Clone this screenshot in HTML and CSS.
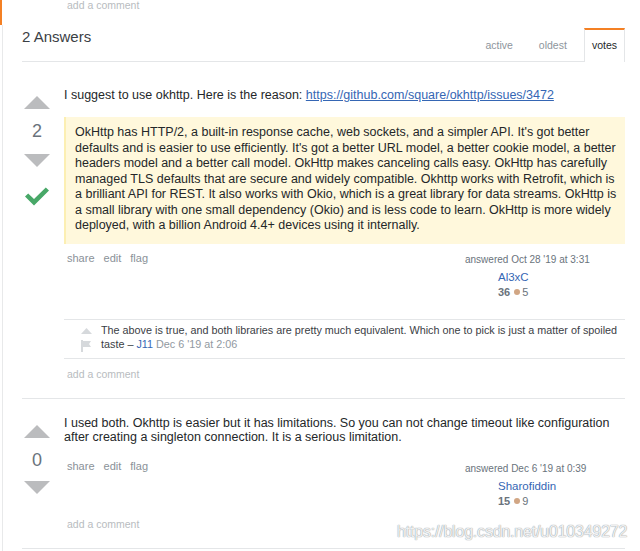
FILE: index.html
```html
<!DOCTYPE html>
<html>
<head>
<meta charset="utf-8">
<link rel="stylesheet" href="styles.css">
</head>
<body>
<div class="page">
  <div class="prev-comment"><span class="add-comment">add a comment</span></div>
  <div class="main">
    <div class="answers-header">
      <h2 class="answers-count">2 Answers</h2>
      <div class="tabs">
        <span class="tab">active</span>
        <span class="tab">oldest</span>
        <span class="tab selected">votes</span>
      </div>
    </div>

    <div class="answer answer-first">
      <div class="votecell">
        <svg class="vote-up" width="26" height="13" viewBox="0 0 26 13"><polygon points="0,13 13,0 26,13" fill="#bbbcbe"/></svg>
        <div class="vote-count">2</div>
        <svg class="vote-down" width="26" height="13" viewBox="0 0 26 13"><polygon points="0,0 26,0 13,13" fill="#bbbcbe"/></svg>
        <svg class="accepted" width="24" height="20" viewBox="0 0 24 20"><path d="M0 9.5 L3.2 6.5 L9 12 L20.8 0.5 L24 3.5 L9 18.5 Z" fill="#48a868"/></svg>
      </div>
      <div class="postcell">
        <p class="post-text">I suggest to use okhttp. Here is the reason: <a class="link" href="#">https://github.com/square/okhttp/issues/3472</a></p>
        <blockquote class="quote">OkHttp has HTTP/2, a built-in response cache, web sockets, and a simpler API. It's got better<br>defaults and is easier to use efficiently. It's got a better URL model, a better cookie model, a better<br>headers model and a better call model. OkHttp makes canceling calls easy. OkHttp has carefully<br>managed TLS defaults that are secure and widely compatible. Okhttp works with Retrofit, which is<br>a brilliant API for REST. It also works with Okio, which is a great library for data streams. OkHttp is<br>a small library with one small dependency (Okio) and is less code to learn. OkHttp is more widely<br>deployed, with a billion Android 4.4+ devices using it internally.</blockquote>
        <div class="post-footer">
          <div class="post-menu"><span>share</span><span>edit</span><span>flag</span></div>
          <div class="user-card">
            <div class="user-action">answered Oct 28 '19 at 3:31</div>
            <div class="user-details">
              <a class="user-name" href="#">Al3xC</a>
              <div class="user-rep"><span class="rep">36</span><span class="badge-dot"></span><span class="badge-count">5</span></div>
            </div>
          </div>
        </div>
        <div class="comments">
          <div class="comment">
            <div class="comment-actions">
              <svg width="11" height="6" viewBox="0 0 11 6"><polygon points="0,6 5.5,0 11,6" fill="#d6d9dc"/></svg>
              <svg width="10" height="12" viewBox="0 0 10 12"><path d="M0 0 H2 V12 H0 Z M2 1 H10 L8 4 L10 7 H2 Z" fill="#d6d9dc"/></svg>
            </div>
            <div class="comment-text">The above is true, and both libraries are pretty much equivalent. Which one to pick is just a matter of spoiled taste – <a class="comment-user" href="#">J11</a> <span class="comment-date">Dec 6 '19 at 2:06</span></div>
          </div>
        </div>
        <div class="add-comment add-comment-block">add a comment</div>
      </div>
    </div>

    <div class="answer answer-second">
      <div class="votecell">
        <svg class="vote-up" width="26" height="13" viewBox="0 0 26 13"><polygon points="0,13 13,0 26,13" fill="#bbbcbe"/></svg>
        <div class="vote-count">0</div>
        <svg class="vote-down" width="26" height="13" viewBox="0 0 26 13"><polygon points="0,0 26,0 13,13" fill="#bbbcbe"/></svg>
      </div>
      <div class="postcell">
        <p class="post-text">I used both. Okhttp is easier but it has limitations. So you can not change timeout like configuration after creating a singleton connection. It is a serious limitation.</p>
        <div class="post-footer">
          <div class="post-menu"><span>share</span><span>edit</span><span>flag</span></div>
          <div class="user-card">
            <div class="user-action">answered Dec 6 '19 at 0:39</div>
            <div class="user-details">
              <a class="user-name" href="#">Sharofiddin</a>
              <div class="user-rep"><span class="rep">15</span><span class="badge-dot"></span><span class="badge-count">9</span></div>
            </div>
          </div>
        </div>
        <div class="add-comment add-comment-block">add a comment</div>
      </div>
    </div>
  </div>
  <div class="watermark">https://blog.csdn.net/u010349272</div>
</div>
</body>
</html>
```
FILE: styles.css
```css
* { box-sizing: border-box; }
html, body { margin: 0; padding: 0; background: #fff; }
body {
  font-family: "Liberation Sans", Arial, sans-serif;
  color: #242729;
  width: 640px;
  height: 551px;
  overflow: hidden;
}
.page { position: relative; height: 551px; }
.prev-comment {
  height: 25px;
  border-left: 2px solid #f48024;
  padding-left: 65px;
}
.add-comment {
  color: #b8bcc0;
  font-size: 10.5px;
}
.prev-comment .add-comment { display: block; line-height: 10px; }
.main {
  margin-left: 2px;
  border-left: 1px solid #e8e9ea;
  padding: 0 15px 0 19px;
  height: 526px;
}
.answers-header {
  display: flex;
  justify-content: space-between;
  align-items: flex-start;
  padding-top: 3px;
  height: 37px;
  border-bottom: 1px solid #e4e6e8;
}
.answers-count {
  margin: 0;
  font-weight: normal;
  font-size: 15px;
  line-height: 18px;
  color: #3b4045;
}
.tabs { display: flex; gap: 8px; }
.tab {
  height: 34px;
  padding: 8px 8px 0;
  font-size: 10.5px;
  line-height: 14px;
  color: #8e959c;
  border: 1px solid transparent;
  border-top: 2px solid transparent;
}
.tab.selected {
  padding: 8px 7px 0;
  color: #242729;
  background: #fff;
  border-color: #e4e6e8;
  border-top-color: #f48024;
  border-bottom: none;
}
.answer {
  display: flex;
  gap: 12px;
  border-bottom: 1px solid #e4e6e8;
}
.answer-first { padding-top: 25px; padding-bottom: 17px; }
.answer-second { padding-top: 17px; padding-bottom: 17px; }
.votecell {
  width: 30px;
  display: flex;
  flex-direction: column;
  align-items: center;
  padding-top: 9px;
}
.vote-up, .vote-down, .accepted { display: block; }
.vote-count {
  margin-top: 11px;
  font-size: 18px;
  line-height: 22px;
  color: #6a737c;
}
.vote-down { margin-top: 12px; }
.answer-second .vote-down { margin-top: 10px; }
.accepted { margin-top: 20px; }
.postcell { flex: 1; min-width: 0; }
.post-text {
  margin: 0;
  font-size: 12.5px;
  line-height: 17px;
}
.answer-second .post-text { line-height: 14.5px; }
.link { color: #3566b4; text-decoration: underline; }
.quote {
  margin: 13px 0 0;
  background: #fff8dc;
  border-left: 2px solid #fcefb3;
  padding: 8px 4px 10px 9px;
  font-size: 12.5px;
  line-height: 15.5px;
  white-space: nowrap;
}
.post-footer {
  display: flex;
  justify-content: space-between;
  align-items: flex-start;
  margin-top: 7px;
}
.answer-second .post-footer { margin-top: 14px; }
.answer-second .user-card { padding-top: 3px; }
.post-menu {
  display: flex;
  gap: 9px;
  padding-left: 3px;
  font-size: 11px;
  line-height: 14px;
  color: #8a9198;
}
.user-card {
  width: 160px;
  padding-top: 2px;
}
.user-action {
  font-size: 10px;
  line-height: 14px;
  color: #6a737c;
}
.user-details {
  margin-left: 33px;
  margin-top: 3px;
  font-size: 11.5px;
  line-height: 15px;
}
.user-name { color: #3566b4; text-decoration: none; display: block; }
.user-rep {
  display: flex;
  align-items: center;
  color: #535a60;
  font-size: 11px;
  line-height: 15px;
}
.rep { font-weight: bold; color: #6a737c; }
.badge-dot {
  width: 6px;
  height: 6px;
  border-radius: 50%;
  background: #d1a684;
  margin: 0 2px 0 4px;
}
.badge-count { color: #6a737c; }
.comments {
  margin-top: 19px;
  border-top: 1px solid #e4e6e8;
  border-bottom: 1px solid #e4e6e8;
}
.comment {
  display: flex;
  padding: 3px 0 6px;
}
.comment-actions {
  width: 37px;
  padding-left: 17px;
  padding-top: 5px;
  display: flex;
  flex-direction: column;
  gap: 6px;
}
.comment-actions svg { display: block; }
.comment-text {
  flex: 1;
  font-size: 10.8px;
  line-height: 14px;
  color: #3b4045;
}
.comment-user { color: #3566b4; text-decoration: none; }
.comment-date { color: #9199a1; }
.add-comment-block {
  margin-top: 8px;
  padding-left: 3px;
  line-height: 14px;
}
.answer-second .add-comment-block { margin-top: 8px; }
.watermark {
  position: absolute;
  left: 397px;
  top: 522px;
  font-size: 16px;
  line-height: 20px;
  color: rgba(255,255,255,0.85);
  text-shadow: 0 0 1px #9aa0a6, 0 0 1px #9aa0a6;
  letter-spacing: -0.2px;
}
```
